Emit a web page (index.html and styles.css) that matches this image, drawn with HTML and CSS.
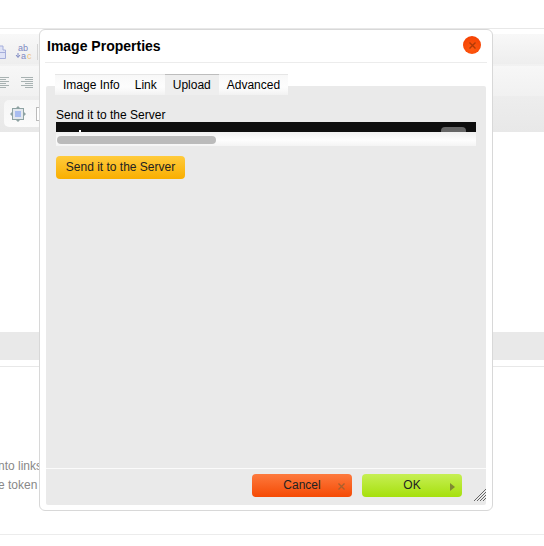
FILE: index.html
```html
<!DOCTYPE html>
<html lang="en">
<head>
  <meta charset="UTF-8">
  <meta name="viewport" content="width=device-width, initial-scale=1.0">
  <title>Image Properties</title>
  <link rel="stylesheet" href="styles.css">
</head>
<body>
  <div class="page">
    <div class="toolbar-band">
      <div class="tool-row tool-row-first">
        <svg width="6" height="14" viewBox="0 0 6 14">
          <path d="M-2 1h5v4h2.500v8.500h-7.500z" fill="#dfe3f6" stroke="#a5aedb"/>
          <path d="M-2 7.500h7.500" stroke="#a5aedb"/>
        </svg>
        <svg class="icon-replace" width="18" height="16" viewBox="0 0 18 16">
          <text x="3" y="7" class="icon-text">ab</text>
          <path d="M3 9v4M1 11l2 2.500 2-2.500" fill="none" stroke="#7d88c2"/>
          <text x="6" y="15" class="icon-text">a</text>
          <text x="12" y="15" class="icon-text icon-text-orange">c</text>
        </svg>
        <span class="tool-sep"></span>
      </div>
      <div class="tool-row tool-row-second">
        <svg width="9" height="11" viewBox="0 0 9 11">
          <path d="M0 .5h9M0 2.500h6M0 4.500h9M0 6.500h6M0 8.500h9M0 10.500h6" stroke="#a8b2b2"/>
        </svg>
        <svg width="12" height="11" viewBox="0 0 12 11">
          <path d="M0 .5h12M4 2.500h8M0 4.500h12M4 6.500h8M0 8.500h12M4 10.500h8" stroke="#a8b2b2"/>
        </svg>
      </div>
      <div class="tool-box">
        <svg width="16" height="16" viewBox="0 0 16 16">
          <path d="M8 0l2.500 2.500h-5zM8 16l2.500-2.500h-5zM0 8l2.500-2.500v5zM16 8l-2.500-2.500v5z" fill="#8fa3a3"/>
          <rect x="2.500" y="2.500" width="11" height="11" fill="#e3e8ee" stroke="#8fa3a3"/>
          <rect x="5" y="5" width="6" height="6" fill="#a9bdf0"/>
        </svg>
        <span class="tool-box-next"></span>
      </div>
    </div>
    <div class="grey-band"></div>
    <div class="page-line"></div>
    <div class="page-text">
      <p>nto links and</p>
      <p>e token and</p>
    </div>
    <div class="bottom-line"></div>

    <div class="dialog">
      <div class="dialog-title">
        <h1>Image Properties</h1>
        <span class="close-btn">
          <svg width="9" height="9" viewBox="0 0 9 9"><path d="M1.500 1.500l6 6M7.500 1.500l-6 6" stroke="#b03a08" stroke-width="1.400"/></svg>
        </span>
      </div>
      <div class="tabs">
        <span class="tab tab-first">Image Info</span>
        <span class="tab">Link</span>
        <span class="tab tab-active">Upload</span>
        <span class="tab">Advanced</span>
      </div>
      <div class="panel">
        <div class="panel-body">
          <label class="upload-label">Send it to the Server</label>
          <div class="file-frame">
            <span class="file-caret"></span>
            <span class="file-btn"></span>
          </div>
          <div class="scroll-track"><span class="scroll-thumb"></span></div>
          <button class="send-btn">Send it to the Server</button>
        </div>
        <div class="panel-footer">
          <button class="foot-btn cancel-btn">Cancel
            <svg class="btn-mark" width="7" height="7" viewBox="0 0 7 7"><path d="M.5.5l6 6M6.500.5l-6 6" stroke="#a8602e" stroke-width="1.300"/></svg>
          </button>
          <button class="foot-btn ok-btn">OK
            <svg class="btn-mark" width="5" height="8" viewBox="0 0 5 8"><path d="M0 0l5 4-5 4z" fill="#7f8a32"/></svg>
          </button>
        </div>
      </div>
      <svg class="grip" width="12" height="12" viewBox="0 0 12 12">
        <path d="M0 12L12 0M3 12l9-9M6 12l6-6M9 12l3-3" stroke="#666"/>
      </svg>
    </div>
  </div>
</body>
</html>
```

FILE: styles.css
```css
html, body {
  margin: 0;
  padding: 0;
}
body {
  font-family: 'Liberation Sans', Arial, sans-serif;
  background-color: #fff;
  color: #000;
}
.page {
  position: relative;
  width: 544px;
  height: 546px;
  overflow: hidden;
  padding-top: 34px;
  box-sizing: border-box;
}
.page::before {
  content: "";
  position: absolute;
  top: 28px;
  left: 0;
  right: 0;
  height: 1px;
  background-color: #e8e8e8;
}

/* editor behind the dialog */
.toolbar-band {
  height: 98px;
  background: linear-gradient(#f6f6f6, #e8e8e8);
}
.tool-row {
  display: flex;
  height: 30px;
  box-sizing: border-box;
}
.tool-row-first {
  align-items: flex-start;
  padding-top: 11px;
  background: linear-gradient(#f8f8f8, #eeeeee);
}
.icon-replace {
  margin-left: 9px;
  margin-top: -1px;
}
.icon-text {
  font-size: 9px;
  fill: #7d88c2;
}
.icon-text-orange {
  fill: #efc27a;
}
.tool-sep {
  width: 1px;
  height: 16px;
  margin-left: 4px;
  margin-top: -1px;
  background-color: #d4d4d4;
}
.tool-row-second {
  gap: 12px;
  margin-top: 2px;
  padding-top: 11px;
  background: linear-gradient(#f7f7f7, #f1f1f1);
}
.tool-box {
  display: flex;
  align-items: center;
  gap: 10px;
  width: 60px;
  height: 27px;
  margin: 4px 0 0 4px;
  padding-left: 6px;
  box-sizing: border-box;
  background: linear-gradient(#f6f6f6, #fbfbfb);
  border-radius: 5px;
}
.tool-box-next {
  width: 8px;
  height: 14px;
  box-sizing: border-box;
  background-color: #fff;
  border: 1px solid #bbb;
}
.grey-band {
  height: 28px;
  margin-top: 200px;
  background-color: #e9e9e9;
}
.page-line {
  height: 1px;
  margin-top: 6px;
  background-color: #e8e8e8;
}
.page-text {
  margin: 90px 0 0 -2px;
  font-size: 12px;
  line-height: 19px;
  color: #888;
}
.page-text p {
  margin: 0;
  white-space: nowrap;
}
.bottom-line {
  height: 1px;
  margin-top: 39px;
  background-color: #ececec;
}

/* dialog */
.dialog {
  position: absolute;
  left: 39px;
  top: 29px;
  width: 454px;
  height: 482px;
  box-sizing: border-box;
  background-color: #fff;
  border: 1px solid #d8d8d8;
  border-radius: 6px;
  padding: 0 6px 5px 6px;
  display: flex;
  flex-direction: column;
}
.dialog-title {
  display: flex;
  justify-content: space-between;
  align-items: center;
  height: 32px;
  margin-left: -1px;
  margin-right: -1px;
  padding: 0 6px 0 2px;
  border-bottom: 1px solid #ececec;
}
.dialog-title h1 {
  margin: 0;
  font-size: 14px;
  font-weight: bold;
}
.close-btn {
  display: flex;
  align-items: center;
  justify-content: center;
  width: 18px;
  height: 18px;
  margin-top: -2px;
  border-radius: 50%;
  background: radial-gradient(circle at 50% 70%, #ff5a10, #f23c00);
}
.tabs {
  display: flex;
  align-self: flex-start;
  position: relative;
  z-index: 1;
  margin: 11px 0 0 9px;
  border-top: 1px solid #e6e6e6;
  background: linear-gradient(#f8f8f8, #fdfdfd 60%, #f2f2f2);
}
.tab {
  padding: 0 8px;
  height: 20px;
  font-size: 12px;
  line-height: 20px;
}
.tab-first {
  padding-right: 7px;
}
.tab-active {
  background-color: #eee;
  box-shadow: 0 -1px 0 #bdbdbd;
}
.panel {
  flex: 1;
  display: flex;
  flex-direction: column;
  margin-top: -9px;
  background-color: #eaeaea;
  border-radius: 2px;
}
.panel-body {
  flex: 1;
  padding: 22px 10px 0 10px;
}
.upload-label {
  display: block;
  height: 14px;
  font-size: 12px;
  line-height: 14px;
}
.file-frame {
  position: relative;
  height: 10px;
  background-color: #0e0e0e;
  overflow: hidden;
}
.file-caret {
  position: absolute;
  left: 23px;
  top: 8px;
  width: 2px;
  height: 2px;
  background-color: #fff;
}
.file-btn {
  position: absolute;
  right: 10px;
  top: 5px;
  width: 25px;
  height: 8px;
  background-color: #666;
  border-radius: 4px;
}
.scroll-track {
  height: 14px;
  padding: 4px 1px 0 1px;
  box-sizing: border-box;
  background: linear-gradient(#f0f0f0, #fdfdfd 60%, #f4f4f4);
}
.scroll-thumb {
  display: block;
  width: 159px;
  height: 8px;
  background-color: #bbb;
  border-radius: 4px;
}
button {
  border: none;
  padding: 0 0 2px 0;
  font-family: inherit;
  font-size: 12px;
  color: #222;
  cursor: pointer;
}
.send-btn {
  display: block;
  width: 129px;
  height: 23px;
  margin-top: 10px;
  border-radius: 4px;
  background: linear-gradient(#ffcb3c, #f9ae00);
}
.panel-footer {
  display: flex;
  justify-content: flex-end;
  gap: 10px;
  height: 37px;
  padding: 5px 24px 0 0;
  box-sizing: border-box;
  border-top: 1px solid #fbfbfb;
}
.foot-btn {
  position: relative;
  width: 100px;
  height: 23px;
  border-radius: 4px;
}
.cancel-btn {
  background: linear-gradient(#fd7a3e, #f54a04);
}
.ok-btn {
  background: linear-gradient(#c6ef54, #a6e00c);
}
.btn-mark {
  position: absolute;
  right: 7px;
  top: 9px;
}
.grip {
  position: absolute;
  right: 6px;
  bottom: 9px;
}
```
